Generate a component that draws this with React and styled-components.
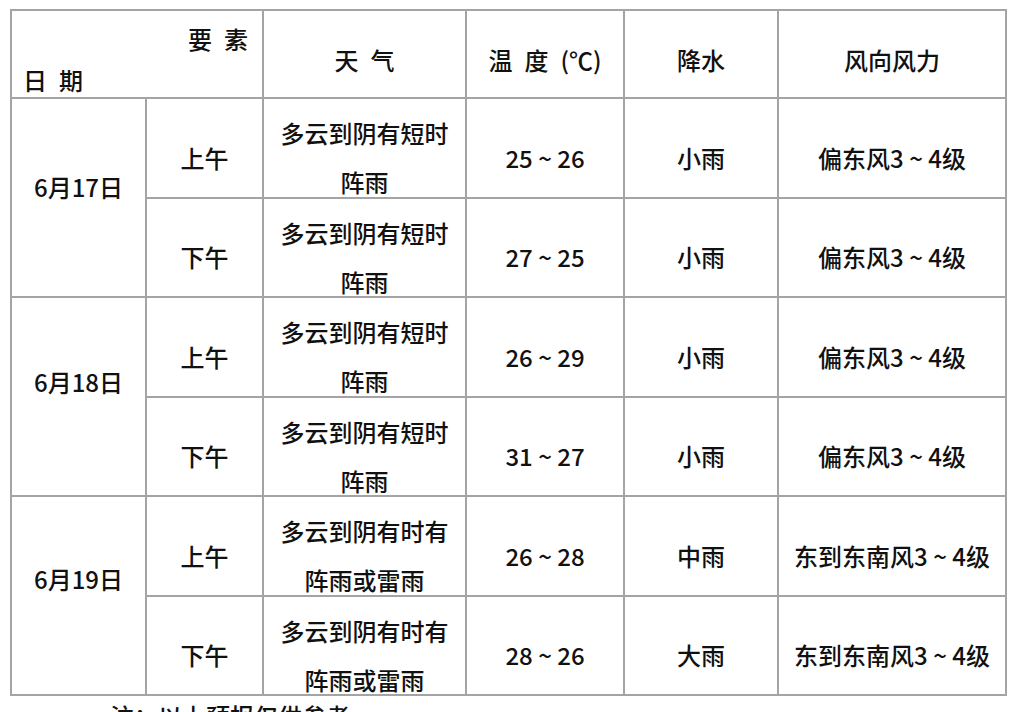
import React from "react";
import styled, { createGlobalStyle } from "styled-components";

const Global = createGlobalStyle`
  html, body { margin: 0; padding: 0; background: #fff; }
  body {
    font-family: "Noto Sans CJK SC", "Noto Sans", sans-serif;
    color: #111;
  }
`;

const Page = styled.div`
  padding: 9px 10px 0 10px;
  width: 1016px;
  box-sizing: border-box;
`;

const Grid = styled.div`
  display: grid;
  grid-template-columns: 135px 117px 203px 158px 154px 228px;
  grid-template-rows: 88px repeat(6, 99.5px);
  border-top: 2px solid #a4a4a4;
  border-left: 2px solid #a4a4a4;
  width: 997px;
  box-sizing: border-box;
  font-size: 24px;
  font-weight: 500;
`;

const Cell = styled.div`
  border-right: 2px solid #a4a4a4;
  border-bottom: 2px solid #a4a4a4;
  box-sizing: border-box;
  display: flex;
  align-items: center;
  justify-content: center;
  text-align: center;
  line-height: 49px;
  padding-top: ${(p) => p.$pt ?? 19}px;
  padding-bottom: ${(p) => p.$pb ?? 0}px;
  grid-column: ${(p) => p.$col || "auto"};
  grid-row: ${(p) => p.$row || "auto"};
  white-space: pre-line;
`;

const Corner = styled.div`
  grid-column: 1 / 3;
  border-right: 2px solid #a4a4a4;
  border-bottom: 2px solid #a4a4a4;
  box-sizing: border-box;
  display: flex;
  flex-direction: column;
  justify-content: space-between;
  padding: 13px 14px 2px 11px;
  line-height: 30px;
`;

const CornerTop = styled.span`
  align-self: flex-end;
`;

const CornerBottom = styled.span`
  align-self: flex-start;
`;

const Note = styled.div`
  padding: 5px 0 0 100px;
  font-size: 24px;
  font-weight: 500;
  line-height: 30px;
`;

const days = [
  {
    date: "6月17日",
    pb: 22,
    rows: [
      ["上午", "多云到阴有短时\n阵雨", "25 ~ 26", "小雨", "偏东风3 ~ 4级"],
      ["下午", "多云到阴有短时\n阵雨", "27 ~ 25", "小雨", "偏东风3 ~ 4级"],
    ],
  },
  {
    date: "6月18日",
    pb: 30,
    rows: [
      ["上午", "多云到阴有短时\n阵雨", "26 ~ 29", "小雨", "偏东风3 ~ 4级"],
      ["下午", "多云到阴有短时\n阵雨", "31 ~ 27", "小雨", "偏东风3 ~ 4级"],
    ],
  },
  {
    date: "6月19日",
    pb: 34,
    rows: [
      ["上午", "多云到阴有时有\n阵雨或雷雨", "26 ~ 28", "中雨", "东到东南风3 ~ 4级"],
      ["下午", "多云到阴有时有\n阵雨或雷雨", "28 ~ 26", "大雨", "东到东南风3 ~ 4级"],
    ],
  },
];

export default function App() {
  return (
    <Page>
      <Global />
      <Grid>
        <Corner>
          <CornerTop>要{"\u2002"}素</CornerTop>
          <CornerBottom>日{"\u2002"}期</CornerBottom>
        </Corner>
        <Cell $pt={10}>天{"\u2002"}气</Cell>
        <Cell $pt={10}>温{"\u2002"}度{"\u2002"}(℃)</Cell>
        <Cell $pt={10}>降水</Cell>
        <Cell $pt={10}>风向风力</Cell>
        {days.map((d, i) => (
          <React.Fragment key={d.date}>
            <Cell $col="1" $row={`${2 + i * 2} / span 2`} $pt={0} $pb={d.pb}>
              {d.date}
            </Cell>
            {d.rows.map((r, j) => (
              <React.Fragment key={j}>
                {r.map((t, k) => (
                  <Cell key={k} $col={`${k + 2}`} $row={`${2 + i * 2 + j}`}>
                    {t}
                  </Cell>
                ))}
              </React.Fragment>
            ))}
          </React.Fragment>
        ))}
      </Grid>
      <Note>注：以上预报仅供参考</Note>
    </Page>
  );
}
